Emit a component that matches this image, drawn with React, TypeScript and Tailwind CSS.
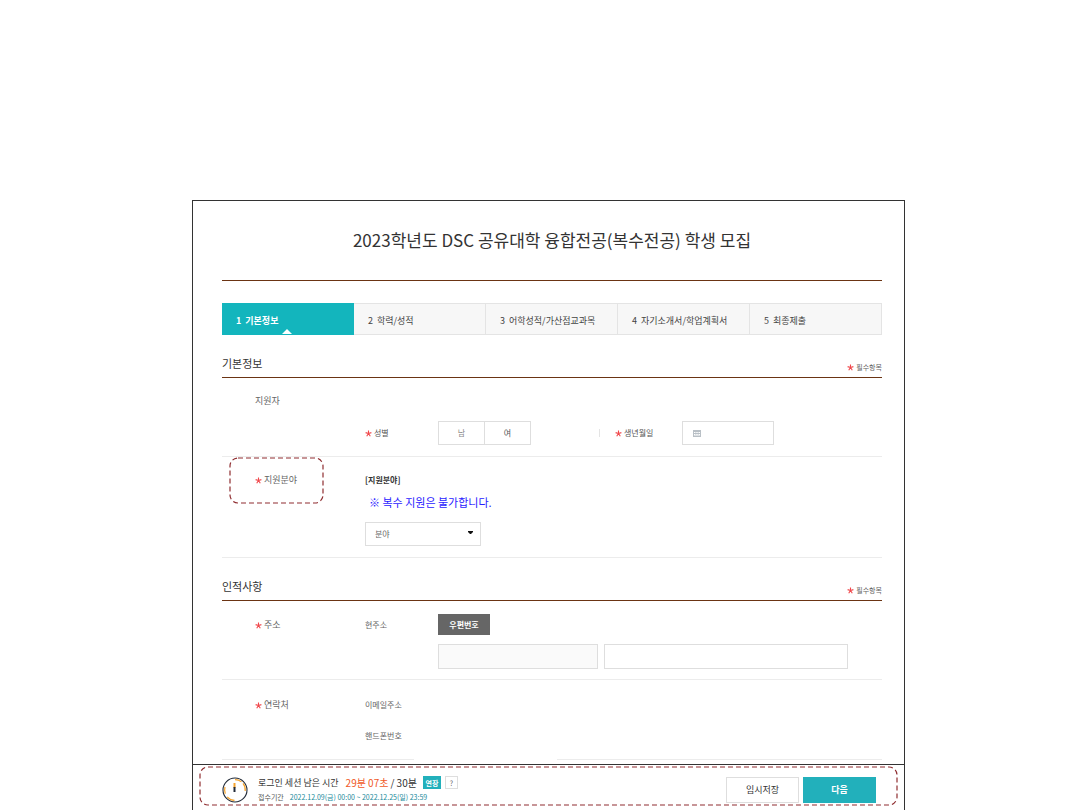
import { useState } from 'react';
import type { ReactNode } from 'react';
import clsx from 'clsx';

const STEPS = ['기본정보', '학력/성적', '어학성적/가산점교과목', '자기소개서/학업계획서', '최종제출'];

function RequiredMark() {
    return (
        <svg viewBox="0 0 7 7" className="w-[7px] h-[7px] shrink-0 text-[#f0474b]" aria-hidden="true">
            <path
                d="M3.5 0.5V3.5M3.5 3.5L0.6 2.6M3.5 3.5L6.4 2.6M3.5 3.5L1.7 6.2M3.5 3.5L5.3 6.2"
                fill="none"
                stroke="currentColor"
                strokeWidth="1.1"
            />
        </svg>
    );
}

function DashedOutline({ className }: { className: string }) {
    return (
        <svg className={clsx('absolute pointer-events-none overflow-visible', className)} aria-hidden="true">
            <rect width="100%" height="100%" rx="8" fill="none" stroke="#8f2d30" strokeWidth="1.2" strokeDasharray="5 3" />
        </svg>
    );
}

function SectionHeading({ title }: { title: string }) {
    return (
        <div className="flex items-end justify-between border-b border-[#6b3413]">
            <h2 className="text-[11px] leading-4 pb-[6px] text-[#333]">{title}</h2>
            <p className="flex items-center gap-[2px] text-[7px] leading-3 pb-1 text-[#666]">
                <RequiredMark />
                필수항목
            </p>
        </div>
    );
}

function RowLabel({ required, children }: { required?: boolean; children: ReactNode }) {
    return (
        <div className="flex items-center self-start gap-[2px] pl-[33px] text-[9px] leading-3 text-[#666]">
            {required && <RequiredMark />}
            {children}
        </div>
    );
}

function CalendarIcon() {
    return (
        <svg viewBox="0 0 8 7" className="w-2 h-[7px] shrink-0" aria-hidden="true">
            <rect width="8" height="7" fill="#b9c0c6" />
            <path d="M1 2h1.5v1H1zM3.25 2h1.5v1h-1.5zM5.5 2H7v1H5.5zM1 4h1.5v1H1zM3.25 4h1.5v1h-1.5zM5.5 4H7v1H5.5zM1 5.6h6v.5H1z" fill="#fff" />
        </svg>
    );
}

function ClockIcon() {
    return (
        <svg viewBox="0 0 26 26" className="w-[26px] h-[26px] shrink-0" aria-hidden="true">
            <circle cx="13" cy="13" r="12" fill="#fff" stroke="#222b38" strokeWidth="1.1" />
            <path
                d="M13 2.6A10.4 10.4 0 0 1 19.5 4.9M21 6.3A10.4 10.4 0 0 1 23.2 14M12.5 23.4A10.4 10.4 0 0 1 5.2 19.8M3.3 16.8A10.4 10.4 0 0 1 3 10"
                fill="none"
                stroke="#f5a32c"
                strokeWidth="1.2"
            />
            <path d="M12.5 6v5" stroke="#f5a32c" strokeWidth="2" />
            <path d="M12.5 10v5" stroke="#222b38" strokeWidth="2" />
        </svg>
    );
}

function StepTabs() {
    const [active, setActive] = useState(0);

    return (
        <nav className="grid grid-cols-5 mt-[22px] text-[9px] leading-3">
            {STEPS.map((step, i) => (
                <button
                    key={step}
                    type="button"
                    onClick={() => setActive(i)}
                    className={clsx(
                        'relative flex items-center gap-1 h-8 pl-[14px] pt-[3px] whitespace-nowrap border-y border-r',
                        i === active
                            ? 'bg-[#13b5bd] border-[#13b5bd] text-white font-bold'
                            : 'bg-[#f7f7f7] border-[#e4e4e4] text-[#444]'
                    )}
                >
                    <span>{i + 1}</span>
                    <span>{step}</span>
                    {i === active && (
                        <svg viewBox="0 0 10 5" className="absolute left-[60px] bottom-0 w-[10px] h-[5px]" aria-hidden="true">
                            <path d="M0 5L5 0L10 5Z" fill="#fff" />
                        </svg>
                    )}
                </button>
            ))}
        </nav>
    );
}

function BasicInfo() {
    return (
        <section className="mt-5">
            <SectionHeading title="기본정보" />

            <div className="pt-[17px] pb-[11px] border-b border-[#ececec]">
                <RowLabel>지원자</RowLabel>
                <div className="grid grid-cols-[143px_73px_1fr] items-center mt-[14px] text-[8px] leading-3 text-[#555]">
                    <span />
                    <span className="flex items-center gap-[2px]">
                        <RequiredMark />
                        성별
                    </span>
                    <div className="flex items-center">
                        <div role="radiogroup" aria-label="성별" className="flex w-[93px] h-6 border border-[#dedede]">
                            <label className="flex-1 flex items-center justify-center border-r border-[#dedede] text-[#888] cursor-pointer">
                                <input type="radio" name="gender" value="m" className="sr-only" />
                                남
                            </label>
                            <label className="flex-1 flex items-center justify-center cursor-pointer">
                                <input type="radio" name="gender" value="f" className="sr-only" />
                                여
                            </label>
                        </div>
                        <label htmlFor="birth" className="flex items-center gap-[2px] ml-[68px] w-[83px]">
                            <span className="w-px h-2 mr-[13px] bg-[#e4e4e4]" />
                            <RequiredMark />
                            생년월일
                        </label>
                        <div className="flex items-center gap-1 w-[92px] h-6 px-[10px] border border-[#dedede]">
                            <CalendarIcon />
                            <input id="birth" type="text" className="min-w-0 flex-1 outline-none" />
                        </div>
                    </div>
                </div>
            </div>

            <div className="relative grid grid-cols-[143px_1fr] pt-[17px] pb-[11px] border-b border-[#ececec]">
                <DashedOutline className="left-2 top-[1px] w-[93px] h-[45px]" />
                <RowLabel required>지원분야</RowLabel>
                <div>
                    <h3 className="text-[8px] leading-3 font-bold text-[#333]">[지원분야]</h3>
                    <p className="mt-2 pl-1 text-[11px] leading-4 text-[#2a1bff]">※ 복수 지원은 불가합니다.</p>
                    <div className="relative w-[116px] mt-3">
                        <select
                            aria-label="분야"
                            className="block appearance-none w-full h-6 pl-[9px] text-[8px] bg-white border border-[#dedede] text-[#666] outline-none"
                        >
                            <option>분야</option>
                        </select>
                        <svg viewBox="0 0 5 3" className="absolute right-2 top-[9px] w-[5px] h-[3px] pointer-events-none" aria-hidden="true">
                            <path d="M0 0H5V1L3 3H2L0 1Z" fill="#111" />
                        </svg>
                    </div>
                </div>
            </div>
        </section>
    );
}

function PersonalInfo() {
    return (
        <section className="mt-5">
            <SectionHeading title="인적사항" />

            <div className="grid grid-cols-[143px_73px_1fr] pt-[13px] pb-[10px] border-b border-[#ececec] text-[8px] leading-3 text-[#666]">
                <div className="pt-[5px]">
                    <RowLabel required>주소</RowLabel>
                </div>
                <span className="pt-[5px]">현주소</span>
                <div>
                    <button type="button" className="block w-[52px] h-[21px] bg-[#666] text-[8px] font-bold text-white">
                        우편번호
                    </button>
                    <div className="flex gap-[6px] mt-[9px] pr-[34px]">
                        <input aria-label="주소" readOnly className="block w-[160px] h-[25px] px-2 bg-[#fafafa] border border-[#dedede] outline-none" />
                        <input aria-label="상세주소" className="block min-w-0 flex-1 h-[25px] px-2 border border-[#dedede] outline-none" />
                    </div>
                </div>
            </div>

            <div className="grid grid-cols-[143px_1fr] pt-[19px] text-[8px] leading-3 text-[#666]">
                <RowLabel required>연락처</RowLabel>
                <div>
                    <p>이메일주소</p>
                    <p className="mt-[19px]">핸드폰번호</p>
                </div>
            </div>
            <div className="flex justify-between mt-[17px] mb-1">
                <span className="w-[192px] h-px bg-[#ececec]" />
                <span className="w-[325px] h-px bg-[#ececec]" />
            </div>
        </section>
    );
}

function SessionBar() {
    return (
        <footer className="relative flex items-center justify-between h-[46px] pl-[29px] pr-7 pt-[5px] border-t border-[#333] bg-white">
            <DashedOutline className="left-[7px] top-[2px] w-[calc(100%-14px)] h-[38px]" />
            <div className="flex items-center gap-[10px]">
                <ClockIcon />
                <div className="pb-[3px]">
                    <div className="flex items-center text-[9px] leading-4 text-[#333]">
                        <span>로그인 세션 남은 시간</span>
                        <span className="ml-[7px] text-[10px] text-[#f05a28]">29분 07초</span>
                        <span className="ml-[2px] text-[10px]">/ 30분</span>
                        <button type="button" className="ml-[6px] w-[18px] h-[13px] bg-[#22b0bb] text-[7px] leading-3 font-bold text-white">
                            연장
                        </button>
                        <button type="button" aria-label="도움말" className="ml-1 w-[13px] h-[13px] border border-[#dedede] text-[7px] leading-[10px] text-[#666]">
                            ?
                        </button>
                    </div>
                    <p className="flex gap-[6px] text-[7px] leading-3 text-[#555]">
                        접수기간
                        <span className="text-[#16899a]">2022.12.09(금) 00:00 ~ 2022.12.25(일) 23:59</span>
                    </p>
                </div>
            </div>
            <div className="flex gap-1 text-[9px]">
                <button type="button" className="w-[73px] h-[26px] border border-[#dedede] bg-white text-[#333]">
                    임시저장
                </button>
                <button type="button" className="w-[73px] h-[26px] bg-[#22b0bb] font-bold text-white">
                    다음
                </button>
            </div>
        </footer>
    );
}

export default function App() {
    return (
        <div className="flex flex-col min-h-screen bg-white pt-[200px] pl-48 pr-[175px] font-['Noto_Sans_CJK_KR','Noto_Sans',sans-serif]">
            <div className="flex-1 flex flex-col border border-b-0 border-[#333]">
                <main className="flex-1 pl-[29px] pr-[22px]">
                    <h1 className="pt-[27px] pb-7 text-center text-[17px] leading-6 text-[#333] border-b border-[#6b3413]">
                        2023학년도 DSC 공유대학 융합전공(복수전공) 학생 모집
                    </h1>
                    <StepTabs />
                    <BasicInfo />
                    <PersonalInfo />
                </main>
                <SessionBar />
            </div>
        </div>
    );
}
